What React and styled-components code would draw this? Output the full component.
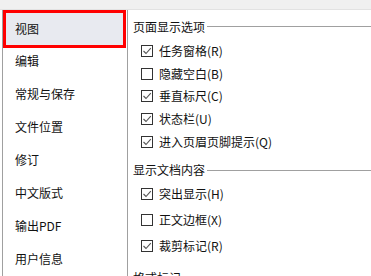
import React from 'react';
import styled, { createGlobalStyle } from 'styled-components';

const GlobalStyle = createGlobalStyle`
  html, body { margin: 0; padding: 0; background: #fff; }
  body { font-family: "Noto Sans CJK SC", "Noto Sans", sans-serif; font-size: 12px; color: #111; }
`;

const navItems = ['视图', '编辑', '常规与保存', '文件位置', '修订', '中文版式', '输出PDF', '用户信息'];

const sections = [
    {
        title: '页面显示选项',
        rowHeight: 22.6,
        gapTop: 4,
        items: [
            { label: '任务窗格(R)', checked: true },
            { label: '隐藏空白(B)', checked: false },
            { label: '垂直标尺(C)', checked: true },
            { label: '状态栏(U)', checked: true },
            { label: '进入页眉页脚提示(Q)', checked: true },
        ],
    },
    {
        title: '显示文档内容',
        rowHeight: 26,
        gapTop: 1,
        items: [
            { label: '突出显示(H)', checked: true },
            { label: '正文边框(X)', checked: false },
            { label: '裁剪标记(R)', checked: true },
        ],
    },
    { title: '格式标记', rowHeight: 24, gapTop: 0, items: [] },
];

const Check = ({ checked }) => (
    <Box>
        {checked && (
            <svg width="10" height="10" viewBox="0 0 10 10">
                <polyline points="1.5,5 4,7.5 8.8,2.2" fill="none" stroke="#555" strokeWidth="1.1" />
            </svg>
        )}
    </Box>
);

export default function App() {
    return (
        <>
            <GlobalStyle />
            <Page>
                <TopBand />
                <Main>
                    <Sidebar>
                        {navItems.map((n, i) => (
                            <NavItem key={n} $active={i === 0}>{n}</NavItem>
                        ))}
                    </Sidebar>
                    <Content>
                        {sections.map((s, si) => (
                            <Section key={s.title} $first={si === 0}>
                                <Heading>{s.title}</Heading>
                                <Rows $gap={s.gapTop}>
                                    {s.items.map(it => (
                                        <Row key={it.label} $h={s.rowHeight}>
                                            <Check checked={it.checked} />
                                            <Label>{it.label}</Label>
                                        </Row>
                                    ))}
                                </Rows>
                            </Section>
                        ))}
                    </Content>
                </Main>
            </Page>
        </>
    );
}

const Page = styled.div` width: 371px; height: 276px; overflow: hidden; display: flex; flex-direction: column; background: #fff; `;
const TopBand = styled.div` height: 9px; flex: none; background: #f0f0f0; border-bottom: 1px solid #e2e2e2; `;
const Main = styled.div` flex: 1; display: flex; min-height: 0; `;
const Sidebar = styled.div` width: 124px; margin-left: 2px; flex: none; border-left: 1px solid #a0a0a0; border-right: 1px solid #a0a0a0; display: flex; flex-direction: column; `;
const NavItem = styled.div`
    flex: none;
    display: flex;
    align-items: center;
    box-sizing: border-box;
    height: ${p => p.$active ? '38px' : '33px'};
    padding-left: ${p => p.$active ? '9px' : '12px'};
    margin-right: ${p => p.$active ? '1px' : '0'};
    margin-bottom: ${p => p.$active ? '-4px' : '0'};
    border: ${p => p.$active ? '3px solid #f00' : 'none'};
    background: ${p => p.$active ? '#e8eaf0' : 'transparent'};
    line-height: 16px;
    white-space: nowrap;
`;
const Content = styled.div` flex: 1; padding: 6px 0 0 5px; display: flex; flex-direction: column; min-width: 0; `;
const Section = styled.div` display: flex; flex-direction: column; margin-top: ${p => p.$first ? '0' : '7px'}; &:last-child { margin-top: 8.7px; } `;
const Heading = styled.div`
    height: 20px;
    display: flex;
    align-items: center;
    gap: 2px;
    white-space: nowrap;
    &::after { content: ''; flex: 1; border-top: 1px solid #a0a0a0; margin-top: 1px; }
`;
const Rows = styled.div` display: flex; flex-direction: column; margin-top: ${p => p.$gap}px; `;
const Row = styled.div` height: ${p => p.$h}px; display: flex; align-items: center; padding-left: 8px; gap: 6px; `;
const Box = styled.div` width: 12px; height: 12px; box-sizing: border-box; border: 1px solid #333; background: #fff; display: flex; align-items: center; justify-content: center; flex: none; `;
const Label = styled.span` white-space: nowrap; line-height: 16px; `;
